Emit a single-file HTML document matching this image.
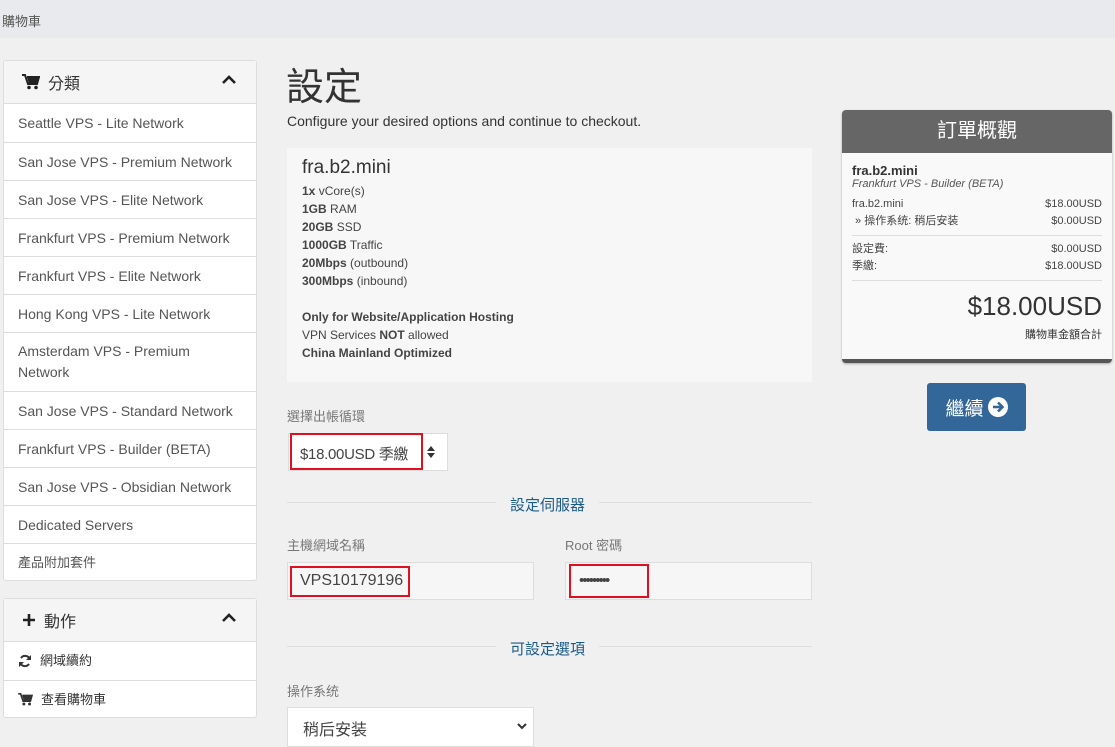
<!DOCTYPE html>
<html><head><meta charset="utf-8"><style>
*{box-sizing:border-box;margin:0;padding:0}
body{width:1115px;height:743px;overflow:hidden;background:#f0f0f0;font-family:"Liberation Sans","Noto Sans CJK TC",sans-serif;color:#333;position:relative;font-size:14px}
.abs{position:absolute}
.top{left:0;top:0;width:1115px;height:38px;background:#e9eaee;font-size:13px;color:#555;padding:11px 2px}
.panel{left:3px;width:254px;background:#fff;border:1px solid #ddd;border-radius:3px}
.ph{height:43px;background:#f5f5f5;border-bottom:1px solid #ddd;padding:10px 18px;font-size:16px;color:#333;position:relative;display:flex;align-items:center;gap:8px}
.ph .car{position:absolute;right:20px;top:14px}
.it{border-top:1px solid #ddd;padding:0 14px;height:38px;line-height:38px;font-size:14px;color:#555;display:flex;align-items:center;gap:8px}
.ph+.it{border-top:0}
.box{left:287px;top:148px;width:525px;height:234px;background:#f7f7f7;padding:8px 15px;font-size:12px;line-height:18px;color:#444}
.lbl{font-size:13px;color:#777}
.inp{background:#f6f6f6;border:1px solid #ddd;height:38px}
.red{border:2px solid #e01020;white-space:nowrap;overflow:hidden}
.sec{font-size:15px;color:#1a5a8a;background:#f0f0f0;padding:0 14px}
.hr{height:1px;background:#ddd}
.sum{left:842px;top:110px;width:270px;height:253px;background:#f9f9f9;border-radius:4px;border-bottom:4px solid #555;box-shadow:0 1px 2px #aaa}
.row{display:flex;justify-content:space-between;font-size:11px;color:#444;line-height:17px}
</style></head><body>
<div class="abs top">購物車</div>

<div class="abs panel" style="top:60px;height:521px">
<div class="ph"><svg width="18" height="16" viewBox="0 0 18 16"><path d="M0 1h3l3 9h9l2-7H5" fill="none" stroke="#222" stroke-width="2"/><path d="M5 3h12l-2 7H7z" fill="#222"/><circle cx="7" cy="13.5" r="1.8" fill="#222"/><circle cx="14" cy="13.5" r="1.8" fill="#222"/></svg>分類<svg class="car" width="14" height="10" viewBox="0 0 14 10"><path d="M1 8l6-6 6 6" fill="none" stroke="#222" stroke-width="2.6"/></svg></div>
<div class="it">Seattle VPS - Lite Network</div>
<div class="it">San Jose VPS - Premium Network</div>
<div class="it">San Jose VPS - Elite Network</div>
<div class="it">Frankfurt VPS - Premium Network</div>
<div class="it">Frankfurt VPS - Elite Network</div>
<div class="it">Hong Kong VPS - Lite Network</div>
<div class="it" style="height:59px;line-height:21px">Amsterdam VPS - Premium Network</div>
<div class="it">San Jose VPS - Standard Network</div>
<div class="it">Frankfurt VPS - Builder (BETA)</div>
<div class="it">San Jose VPS - Obsidian Network</div>
<div class="it">Dedicated Servers</div>
<div class="it" style="font-size:13px">產品附加套件</div>
</div>

<div class="abs panel" style="top:598px;height:120px">
<div class="ph"><svg width="14" height="14" viewBox="0 0 14 14"><path d="M7 1v12M1 7h12" stroke="#222" stroke-width="2.6"/></svg>動作<svg class="car" width="14" height="10" viewBox="0 0 14 10"><path d="M1 8l6-6 6 6" fill="none" stroke="#222" stroke-width="2.6"/></svg></div>
<div class="it" style="font-size:13px;color:#333"><svg width="14" height="14" viewBox="0 0 14 14"><path d="M12 6A5 5 0 0 0 3 4M2 8a5 5 0 0 0 9 2" fill="none" stroke="#333" stroke-width="2"/><path d="M13 1v5H8zM1 13V8h5z" fill="#333"/></svg>網域續約</div>
<div class="it" style="font-size:13px;color:#333"><svg width="15" height="13" viewBox="0 0 18 16"><path d="M0 1h3l3 9h9l2-7H5" fill="none" stroke="#333" stroke-width="2"/><path d="M5 3h12l-2 7H7z" fill="#333"/><circle cx="7" cy="13.5" r="1.8" fill="#333"/><circle cx="14" cy="13.5" r="1.8" fill="#333"/></svg>查看購物車</div>
</div>

<div class="abs" style="left:286px;top:56px;font-size:38px;color:#333">設定</div>
<div class="abs" style="left:287px;top:113px;font-size:14px;color:#333">Configure your desired options and continue to checkout.</div>
<div class="abs box">
<div style="font-size:19px;line-height:24px;color:#333;margin-bottom:2px">fra.b2.mini</div>
<b>1x</b> vCore(s)<br><b>1GB</b> RAM<br><b>20GB</b> SSD<br><b>1000GB</b> Traffic<br><b>20Mbps</b> (outbound)<br><b>300Mbps</b> (inbound)<br><br>
<b>Only for Website/Application Hosting</b><br>VPN Services <b>NOT</b> allowed<br><b>China Mainland Optimized</b>
</div>

<div class="abs lbl" style="left:287px;top:406px">選擇出帳循環</div>
<div class="abs" style="left:288px;top:433px;width:160px;height:38px;background:#fff;border:1px solid #ddd"></div>
<div class="abs red" style="left:290px;top:433px;width:133px;height:37px;font-size:15px;padding:8px 8px;color:#444;letter-spacing:-0.3px">$18.00USD 季繳</div>
<svg class="abs" style="left:427px;top:445px" width="8" height="14" viewBox="0 0 8 14"><path d="M0 6L4 1l4 5zM0 8l4 5 4-5z" fill="#333"/></svg>

<div class="abs hr" style="left:287px;top:502px;width:525px"></div>
<div class="abs sec" style="left:496px;top:494px">設定伺服器</div>

<div class="abs lbl" style="left:287px;top:535px">主機網域名稱</div>
<div class="abs inp" style="left:287px;top:562px;width:247px"></div>
<div class="abs red" style="left:290px;top:566px;width:120px;height:31px;font-size:16px;padding:4px 8px;color:#444">VPS10179196</div>
<div class="abs lbl" style="left:565px;top:535px">Root 密碼</div>
<div class="abs inp" style="left:565px;top:562px;width:247px"></div>
<div class="abs red" style="left:569px;top:564px;width:80px;height:34px;font-size:15px;padding:6px 8px;color:#444;letter-spacing:-2px">•••••••••</div>

<div class="abs hr" style="left:287px;top:646px;width:525px"></div>
<div class="abs sec" style="left:496px;top:638px">可設定選項</div>

<div class="abs lbl" style="left:287px;top:681px">操作系统</div>
<div class="abs" style="left:287px;top:707px;width:247px;height:40px;background:#fff;border:1px solid #ddd;font-size:16px;padding:8px 15px;color:#444">稍后安装<svg style="position:absolute;right:6px;top:14px" width="10" height="8" viewBox="0 0 10 8"><path d="M1 2l4 4 4-4" fill="none" stroke="#333" stroke-width="2"/></svg></div>

<div class="abs sum">
<div style="height:43px;background:#666;color:#fff;font-size:20px;text-align:center;line-height:43px;border-radius:4px 4px 0 0">訂單概觀</div>
<div style="padding:10px 10px 0">
<div style="font-size:13px;font-weight:bold;color:#333">fra.b2.mini</div>
<div style="font-size:11px;font-style:italic;color:#555;margin-bottom:6px">Frankfurt VPS - Builder (BETA)</div>
<div class="row"><span>fra.b2.mini</span><span>$18.00USD</span></div>
<div class="row"><span>&nbsp;» 操作系统: 稍后安装</span><span>$0.00USD</span></div>
<div class="hr" style="margin:5px 0"></div>
<div class="row"><span>設定費:</span><span>$0.00USD</span></div>
<div class="row"><span>季繳:</span><span>$18.00USD</span></div>
<div class="hr" style="margin:5px 0"></div>
<div style="text-align:right;font-size:26px;color:#333;line-height:40px;margin-top:4px">$18.00USD</div>
<div style="text-align:right;font-size:11px;color:#333">購物車金額合計</div>
</div></div>

<div class="abs" style="left:927px;top:383px;width:99px;height:48px;background:#336699;border-radius:3px;color:#fff;font-size:19px;display:flex;align-items:center;justify-content:center;gap:4px">繼續<svg width="20" height="20" viewBox="0 0 20 20"><circle cx="10" cy="10" r="10" fill="#fff"/><path d="M5 10h9M10 5.5l4.5 4.5-4.5 4.5" fill="none" stroke="#336699" stroke-width="2.6"/></svg></div>
</body></html>
